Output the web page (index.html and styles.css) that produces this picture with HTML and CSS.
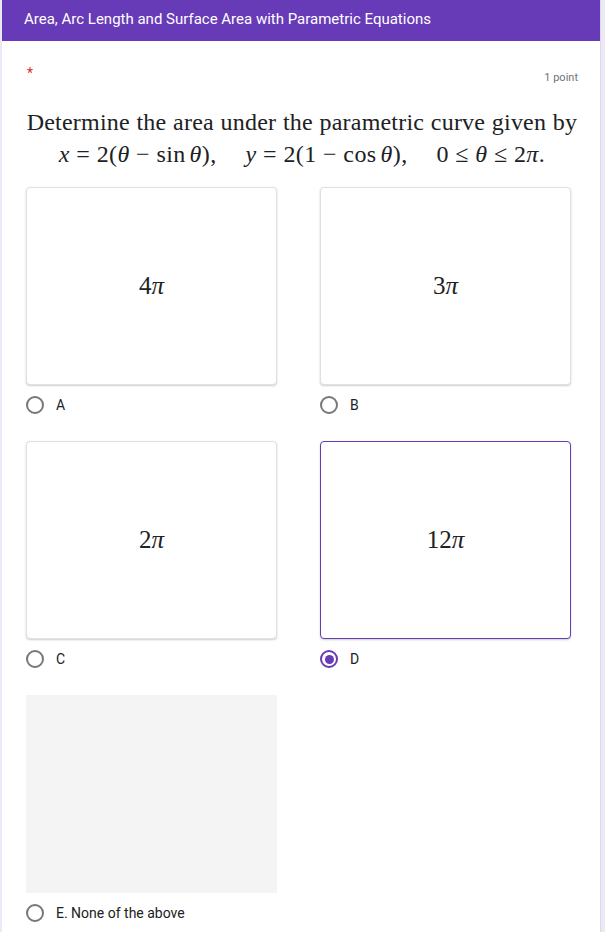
FILE: index.html
```html
<!DOCTYPE html>
<html>
<head>
<meta charset="utf-8">
<link rel="stylesheet" href="styles.css">
</head>
<body>
<div class="page">
  <div class="card">
    <header class="header">Area, Arc Length and Surface Area with Parametric Equations</header>
    <div class="content">
      <div class="meta-row">
        <span class="required">*</span>
        <span class="points">1 point</span>
      </div>
      <div class="question">
        <div class="q-line">Determine the area under the parametric curve given by</div>
        <div class="q-line math"><i>x</i> = 2(<i>θ</i> − sin<span class="thin"></span><i>θ</i>),<span class="quad"></span><i>y</i> = 2(1 − cos<span class="thin"></span><i>θ</i>),<span class="quad"></span>0 ≤ <i>θ</i> ≤ 2<i>π</i>.</div>
      </div>
      <div class="options">
        <div class="option">
          <div class="img-box"><span class="m">4<i>π</i></span></div>
          <div class="opt-label"><span class="radio"></span><span class="txt">A</span></div>
        </div>
        <div class="option">
          <div class="img-box"><span class="m">3<i>π</i></span></div>
          <div class="opt-label"><span class="radio"></span><span class="txt">B</span></div>
        </div>
        <div class="option">
          <div class="img-box"><span class="m">2<i>π</i></span></div>
          <div class="opt-label"><span class="radio"></span><span class="txt">C</span></div>
        </div>
        <div class="option">
          <div class="img-box selected"><span class="m">12<i>π</i></span></div>
          <div class="opt-label"><span class="radio checked"></span><span class="txt">D</span></div>
        </div>
        <div class="option">
          <div class="img-box empty"></div>
          <div class="opt-label"><span class="radio"></span><span class="txt">E. None of the above</span></div>
        </div>
      </div>
    </div>
  </div>
</div>
</body>
</html>
```

FILE: styles.css
```css
html, body {
  margin: 0;
  padding: 0;
  background: #ede7f6;
}
.page {
  padding-left: 2px;
  width: 599px;
}
.card {
  background: #fff;
  border-right: 1px solid #dadce0;
  min-height: 932px;
}
.header {
  background: #673ab7;
  color: #fff;
  font-family: Roboto, "Liberation Sans", sans-serif;
  font-size: 15px;
  height: 41px;
  line-height: 38px;
  padding-left: 22px;
  letter-spacing: 0;
}
.content {
  padding: 0 22px 0 24px;
}
.meta-row {
  display: flex;
  justify-content: space-between;
  align-items: flex-start;
  height: 48px;
  padding-top: 25px;
  box-sizing: border-box;
  font-family: Roboto, "Liberation Sans", sans-serif;
}
.required {
  color: #d93025;
  font-size: 14px;
  line-height: 14px;
  padding-left: 1px;
}
.points {
  color: #70757a;
  font-size: 11px;
  line-height: 14px;
  padding-top: 5px;
}
.question {
  font-family: "Liberation Serif", "DejaVu Serif", serif;
  font-size: 24px;
  color: #202124;
  line-height: 32px;
  text-align: center;
  padding-top: 17px;
  padding-bottom: 17px;
}
.q-line {
  white-space: nowrap;
  letter-spacing: 0.2px;
  word-spacing: 0.5px;
}
.math {
  letter-spacing: 0.4px;
  word-spacing: 0;
}
.thin { display: inline-block; width: 4px; }
.quad { display: inline-block; width: 29px; }
.options {
  display: grid;
  grid-template-columns: 251px 251px;
  column-gap: 43px;
  row-gap: 16px;
  padding-left: 0;
}
.img-box {
  height: 198px;
  box-sizing: border-box;
  border: 1px solid #e0e0e0;
  border-radius: 4px;
  box-shadow: 0 1px 2px rgba(60, 64, 67, 0.25);
  display: flex;
  align-items: center;
  justify-content: center;
  background: #fff;
}
.img-box.selected {
  border: 1px solid #673ab7;
}
.img-box.empty {
  background: #f4f4f4;
  border: none;
  border-radius: 0;
  box-shadow: none;
}
.m {
  font-family: "Liberation Serif", "DejaVu Serif", serif;
  font-size: 25px;
  color: #202124;
}
.opt-label {
  display: flex;
  align-items: center;
  height: 40px;
  font-family: Roboto, "Liberation Sans", sans-serif;
  font-size: 14px;
  color: #202124;
}
.radio {
  width: 18px;
  height: 18px;
  box-sizing: border-box;
  border: 2px solid #777;
  border-radius: 50%;
  margin-right: 12px;
  display: flex;
  align-items: center;
  justify-content: center;
}
.radio.checked {
  border-color: #673ab7;
}
.radio.checked::after {
  content: "";
  width: 9px;
  height: 9px;
  border-radius: 50%;
  background: #673ab7;
}
```
